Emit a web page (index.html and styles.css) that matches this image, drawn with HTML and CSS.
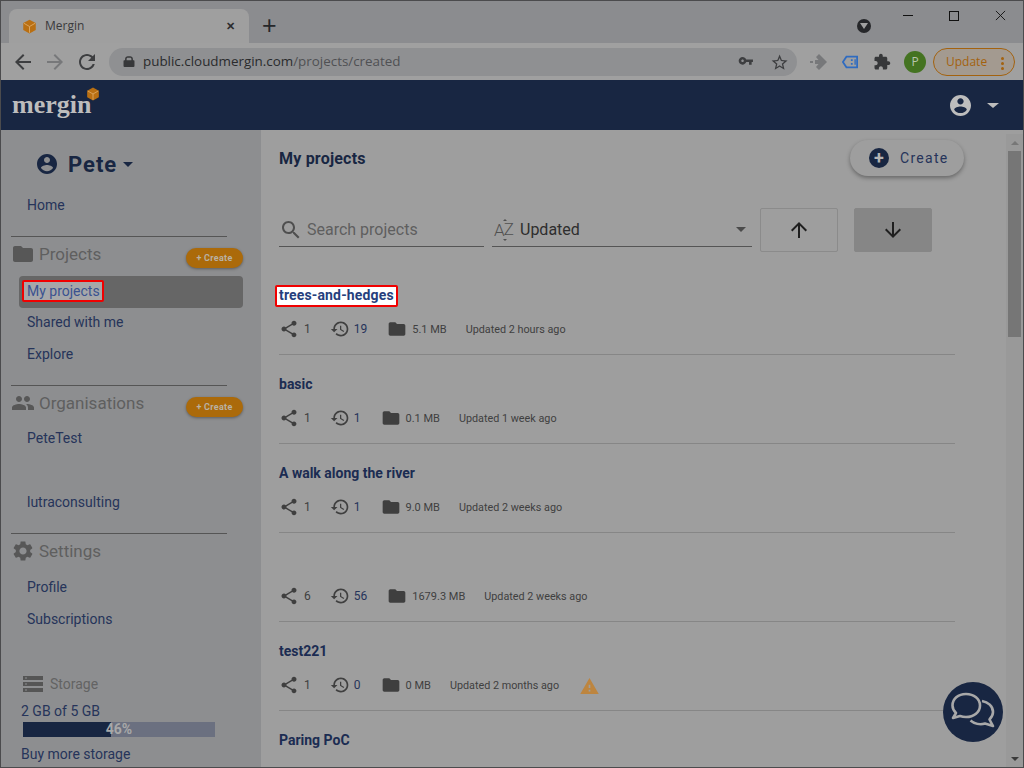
FILE: index.html
```html
<!DOCTYPE html>
<html lang="en">
<head>
<meta charset="UTF-8">
<meta name="viewport" content="width=device-width, initial-scale=1.0">
<title>Mergin</title>
<link rel="stylesheet" href="styles.css">
</head>
<body>
  <svg class="sprite" xmlns="http://www.w3.org/2000/svg">
    <symbol id="i-account" viewBox="2 2 20 20"><path d="M12 2C6.48 2 2 6.48 2 12s4.48 10 10 10 10-4.48 10-10S17.52 2 12 2zm0 3c1.66 0 3 1.34 3 3s-1.34 3-3 3-3-1.34-3-3 1.34-3 3-3zm0 14.2c-2.5 0-4.71-1.28-6-3.22.03-1.99 4-3.08 6-3.08 1.99 0 5.97 1.09 6 3.08-1.29 1.94-3.5 3.22-6 3.22z"/></symbol>
    <symbol id="i-folder" viewBox="0 0 24 24"><path d="M10 4H4c-1.1 0-1.99.9-1.99 2L2 18c0 1.1.9 2 2 2h16c1.1 0 2-.9 2-2V8c0-1.1-.9-2-2-2h-8l-2-2z"/></symbol>
    <symbol id="i-group" viewBox="0 0 24 24"><path d="M16 11c1.66 0 2.99-1.34 2.99-3S17.66 5 16 5c-1.66 0-3 1.34-3 3s1.34 3 3 3zm-8 0c1.66 0 2.99-1.34 2.99-3S9.66 5 8 5C6.34 5 5 6.34 5 8s1.34 3 3 3zm0 2c-2.33 0-7 1.17-7 3.5V19h14v-2.5c0-2.33-4.67-3.5-7-3.5zm8 0c-.29 0-.62.02-.97.05 1.16.84 1.97 1.97 1.97 3.45V19h6v-2.5c0-2.33-4.67-3.5-7-3.5z"/></symbol>
    <symbol id="i-settings" viewBox="0 0 24 24"><path d="M19.14 12.94c.04-.3.06-.61.06-.94 0-.32-.02-.64-.07-.94l2.03-1.58c.18-.14.23-.41.12-.61l-1.92-3.32c-.12-.22-.37-.29-.59-.22l-2.39.96c-.5-.38-1.03-.7-1.62-.94l-.36-2.54c-.04-.24-.24-.41-.48-.41h-3.84c-.24 0-.43.17-.47.41l-.36 2.54c-.59.24-1.13.57-1.62.94l-2.39-.96c-.22-.08-.47 0-.59.22L2.74 8.87c-.12.21-.08.47.12.61l2.03 1.58c-.05.3-.09.63-.09.94s.02.64.07.94l-2.03 1.58c-.18.14-.23.41-.12.61l1.92 3.32c.12.22.37.29.59.22l2.39-.96c.5.38 1.03.7 1.62.94l.36 2.54c.05.24.24.41.48.41h3.84c.24 0 .44-.17.47-.41l.36-2.54c.59-.24 1.13-.56 1.62-.94l2.39.96c.22.08.47 0 .59-.22l1.92-3.32c.12-.22.07-.47-.12-.61l-2.01-1.58zM12 15.6c-1.98 0-3.6-1.62-3.6-3.6s1.62-3.6 3.6-3.6 3.6 1.62 3.6 3.6-1.62 3.6-3.6 3.6z"/></symbol>
    <symbol id="i-share" viewBox="0 0 24 24"><path d="M18 16.08c-.76 0-1.44.3-1.96.77L8.91 12.7c.05-.23.09-.46.09-.7s-.04-.47-.09-.7l7.05-4.11c.54.5 1.25.81 2.04.81 1.66 0 3-1.34 3-3s-1.34-3-3-3-3 1.34-3 3c0 .24.04.47.09.7L8.04 9.81C7.5 9.31 6.79 9 6 9c-1.66 0-3 1.34-3 3s1.34 3 3 3c.79 0 1.5-.31 2.04-.81l7.12 4.16c-.05.21-.08.43-.08.65 0 1.61 1.31 2.92 2.92 2.92s2.92-1.31 2.92-2.92-1.31-2.92-2.92-2.92z"/></symbol>
    <symbol id="i-history" viewBox="0 0 24 24"><path d="M13 3c-4.97 0-9 4.03-9 9H1l3.89 3.89.07.14L9 12H6c0-3.87 3.13-7 7-7s7 3.13 7 7-3.13 7-7 7c-1.93 0-3.68-.79-4.94-2.06l-1.42 1.42C8.27 19.99 10.51 21 13 21c4.97 0 9-4.03 9-9s-4.03-9-9-9zm-1 5v5l4.28 2.54.72-1.21-3.5-2.08V8H12z"/></symbol>
    <symbol id="i-search" viewBox="0 0 24 24"><path d="M15.5 14h-.79l-.28-.27C15.41 12.59 16 11.11 16 9.5 16 5.91 13.09 3 9.5 3S3 5.91 3 9.5 5.91 16 9.5 16c1.61 0 3.09-.59 4.23-1.57l.27.28v.79l5 4.99L20.49 19l-4.99-5zm-6 0C7.01 14 5 11.99 5 9.5S7.01 5 9.5 5 14 7.01 14 9.5 11.99 14 9.5 14z"/></symbol>
    <symbol id="i-up" viewBox="0 0 24 24"><path d="M4 12l1.41 1.41L11 7.83V20h2V7.83l5.58 5.59L20 12l-8-8-8 8z"/></symbol>
    <symbol id="i-down" viewBox="0 0 24 24"><path d="M20 12l-1.41-1.41L13 16.17V4h-2v12.17l-5.58-5.59L4 12l8 8 8-8z"/></symbol>
    <symbol id="i-warning" viewBox="1 2 22 19"><path d="M1 21h22L12 2 1 21zm12-3h-2v-2h2v2zm0-4h-2v-4h2v4z"/></symbol>
    <symbol id="i-storage" viewBox="0 0 20 16"><path fill-rule="evenodd" d="M0 0h20v4H0zM2 1.4v1.2h2V1.4zM0 6h20v4H0zM2 7.4v1.2h2V7.4zM0 12h20v4H0zM2 13.4v1.2h2v-1.2z"/></symbol>
    <symbol id="i-box" viewBox="0 0 24 24"><path d="M12 1l10 5.5v11L12 23 2 17.5v-11z"/><path d="M12 12L3 6.8M12 12l9-5.2M12 12v10" fill="none" stroke="#dba862" stroke-width="1.5"/></symbol>
    <symbol id="i-chat" viewBox="0 0 48 48"><g fill="none" stroke="currentColor" stroke-width="2.6" stroke-linejoin="round"><path d="M33 13c6 1 11 5 11 11 0 3-1.5 5.500-3.500 7.500l3.500 6.500-8-2.500c-5 1.500-11 0-14.500-3"/><path d="M17 6c8 0 14 5 14 11.500S25 29 17 29c-2 0-4-.3-6-1l-7 2 3-5c-2-2-3.500-4.500-3.500-7.500C3.500 11 9 6 17 6z"/></g></symbol>
  </svg>

  <div class="window">
    <div class="tabstrip">
      <div class="tab">
        <svg class="tab-icon"><use href="#i-box"/></svg>
        <span class="tab-title">Mergin</span>
        <span class="tab-close">&#10005;</span>
      </div>
      <span class="new-tab">+</span>
      <span class="media-btn"><i></i></span>
      <div class="win-controls">
        <span class="win-min"></span>
        <span class="win-max"></span>
        <svg class="win-close" viewBox="0 0 12 12"><path d="M1 1l10 10M11 1L1 11"/></svg>
      </div>
    </div>

    <div class="toolbar">
      <svg class="tb-icon"><path d="M20 11H7.83l5.59-5.59L12 4l-8 8 8 8 1.41-1.41L7.83 13H20v-2z"/></svg>
      <svg class="tb-icon tb-off"><path d="M12 4l-1.41 1.41L16.17 11H4v2h12.17l-5.58 5.59L12 20l8-8z"/></svg>
      <svg class="tb-icon"><path d="M17.65 6.35C16.2 4.9 14.21 4 12 4c-4.42 0-7.99 3.58-7.99 8s3.57 8 7.99 8c3.73 0 6.84-2.55 7.73-6h-2.08c-.82 2.33-3.04 4-5.65 4-3.31 0-6-2.69-6-6s2.69-6 6-6c1.66 0 3.14.69 4.22 1.78L13 11h7V4l-2.35 2.35z"/></svg>
      <div class="omnibox">
        <svg class="omni-lock"><path d="M14 6h-.8V4.400C13.200 2.200 11.400.8 9.500.8h-3C4.600.8 2.800 2.200 2.800 4.400V6H2c-.9 0-1.300.6-1.300 1.300v6.400c0 .8.5 1.300 1.300 1.300h12c.8 0 1.300-.5 1.300-1.300V7.300C15.300 6.600 14.900 6 14 6zM4.800 4.400c0-1 .7-1.600 1.700-1.600h3c1 0 1.700.6 1.700 1.600V6H4.800z" transform="scale(.75) translate(0 1)"/></svg>
        <span class="url">public.cloudmergin.com<span class="url-path">/projects/created</span></span>
        <svg class="omni-key"><path d="M12.65 10C11.83 7.67 9.61 6 7 6c-3.31 0-6 2.69-6 6s2.69 6 6 6c2.61 0 4.83-1.67 5.65-4H17v4h4v-4h2v-4H12.65zM7 14c-1.1 0-2-.9-2-2s.9-2 2-2 2 .9 2 2-.9 2-2 2z" transform="translate(0 -2) scale(.65)"/></svg>
        <svg class="omni-star"><path d="M22 9.24l-7.19-.62L12 2 9.19 8.63 2 9.24l5.46 4.73L5.82 21 12 17.27 18.18 21l-1.63-7.03L22 9.24zM12 15.4l-3.76 2.27 1-4.28-3.32-2.88 4.38-.38L12 6.1l1.71 4.04 4.38.38-3.32 2.88 1 4.28L12 15.4z" transform="scale(.8)"/></svg>
      </div>
      <svg class="ext ext-diamond" viewBox="0 0 18 18"><path d="M10 1l8 8-8 8-3-3 2.500-3H6V7h3.500L7 4zM1 8h3v2H1z"/></svg>
      <svg class="ext ext-tag" viewBox="0 0 18 14"><path d="M5 1h12v12H5L1 7z" fill="none" stroke="#2f6bc0" stroke-width="2"/><path d="M10 4h2v2h-2zM10 8h2v2h-2zM14 4h1.500v6H14z" fill="#2f6bc0"/></svg>
      <svg class="ext ext-puzzle" viewBox="0 0 24 24"><path d="M20.5 11H19V7c0-1.1-.9-2-2-2h-4V3.5C13 2.12 11.88 1 10.5 1S8 2.12 8 3.5V5H4c-1.1 0-1.99.9-1.99 2v3.8H3.5c1.49 0 2.7 1.21 2.7 2.7s-1.21 2.7-2.7 2.7H2V20c0 1.1.9 2 2 2h3.8v-1.5c0-1.49 1.21-2.7 2.7-2.7 1.49 0 2.7 1.21 2.7 2.7V22H17c1.1 0 2-.9 2-2v-4h1.5c1.38 0 2.5-1.12 2.5-2.5S21.88 11 20.5 11z"/></svg>
      <span class="avatar">P</span>
      <span class="update">Update<span class="update-dots"><i></i><i></i><i></i></span></span>
    </div>

    <header class="app-bar">
      <div class="logo">mergin<svg class="logo-box"><use href="#i-box"/></svg></div>
      <svg class="bar-user"><use href="#i-account"/></svg>
      <span class="caret caret-light"></span>
    </header>

    <div class="content">
      <aside class="sidebar">
        <div class="user">
          <svg class="user-icon"><use href="#i-account"/></svg>
          <span class="user-name">Pete</span>
          <span class="caret caret-navy"></span>
        </div>
        <a class="nav-item nav-home">Home</a>

        <section class="side-section">
          <div class="side-head">
            <svg class="side-icon"><use href="#i-folder"/></svg>
            <span class="side-title">Projects</span>
            <span class="mini-create">+ Create</span>
          </div>
          <a class="nav-item nav-active"><span class="callout-side">My projects</span></a>
          <a class="nav-item">Shared with me</a>
          <a class="nav-item">Explore</a>
        </section>

        <section class="side-section">
          <div class="side-head side-head-short">
            <svg class="side-icon"><use href="#i-group"/></svg>
            <span class="side-title">Organisations</span>
            <span class="mini-create">+ Create</span>
          </div>
          <a class="nav-item">PeteTest</a>
          <a class="nav-item"></a>
          <a class="nav-item">lutraconsulting</a>
        </section>

        <section class="side-section">
          <div class="side-head">
            <svg class="side-icon"><use href="#i-settings"/></svg>
            <span class="side-title">Settings</span>
          </div>
          <a class="nav-item">Profile</a>
          <a class="nav-item">Subscriptions</a>
        </section>

        <div class="storage">
          <div class="storage-head">
            <svg class="storage-icon"><use href="#i-storage"/></svg>
            <span>Storage</span>
          </div>
          <div class="storage-used">2 GB of 5 GB</div>
          <div class="storage-bar">
            <div class="storage-fill" style="width: 46%"></div>
            <span class="storage-pct">46%</span>
          </div>
          <a class="storage-buy">Buy more storage</a>
        </div>
      </aside>

      <main class="main">
        <div class="main-head">
          <h1>My projects</h1>
          <button class="create-btn" type="button">
            <span class="create-plus">+</span>
            <span>Create</span>
          </button>
        </div>

        <div class="filters">
          <div class="field field-search">
            <svg class="field-icon"><use href="#i-search"/></svg>
            <span>Search projects</span>
          </div>
          <div class="field field-sort">
            <span class="az">A<span class="az-z">Z</span></span>
            <span class="sort-value">Updated</span>
            <span class="caret caret-grey"></span>
          </div>
          <button class="sort-btn" type="button"><svg><use href="#i-up"/></svg></button>
          <button class="sort-btn sort-on" type="button"><svg><use href="#i-down"/></svg></button>
        </div>

        <div class="projects">
          <article class="project">
            <div class="project-name"><span class="callout-main">trees-and-hedges</span></div>
            <div class="meta">
              <svg class="meta-icon"><use href="#i-share"/></svg><span class="count share-count">1</span>
              <svg class="meta-icon"><use href="#i-history"/></svg><span class="count hist-count">19</span>
              <svg class="meta-icon"><use href="#i-folder"/></svg><span class="size">5.1 MB</span>
              <span class="updated">Updated 2 hours ago</span>
            </div>
          </article>
          <article class="project">
            <div class="project-name">basic</div>
            <div class="meta">
              <svg class="meta-icon"><use href="#i-share"/></svg><span class="count share-count">1</span>
              <svg class="meta-icon"><use href="#i-history"/></svg><span class="count hist-count">1</span>
              <svg class="meta-icon"><use href="#i-folder"/></svg><span class="size">0.1 MB</span>
              <span class="updated">Updated 1 week ago</span>
            </div>
          </article>
          <article class="project">
            <div class="project-name">A walk along the river</div>
            <div class="meta">
              <svg class="meta-icon"><use href="#i-share"/></svg><span class="count share-count">1</span>
              <svg class="meta-icon"><use href="#i-history"/></svg><span class="count hist-count">1</span>
              <svg class="meta-icon"><use href="#i-folder"/></svg><span class="size">9.0 MB</span>
              <span class="updated">Updated 2 weeks ago</span>
            </div>
          </article>
          <article class="project">
            <div class="project-name"></div>
            <div class="meta">
              <svg class="meta-icon"><use href="#i-share"/></svg><span class="count share-count">6</span>
              <svg class="meta-icon"><use href="#i-history"/></svg><span class="count hist-count">56</span>
              <svg class="meta-icon"><use href="#i-folder"/></svg><span class="size">1679.3 MB</span>
              <span class="updated">Updated 2 weeks ago</span>
            </div>
          </article>
          <article class="project">
            <div class="project-name">test221</div>
            <div class="meta">
              <svg class="meta-icon"><use href="#i-share"/></svg><span class="count share-count">1</span>
              <svg class="meta-icon"><use href="#i-history"/></svg><span class="count hist-count">0</span>
              <svg class="meta-icon"><use href="#i-folder"/></svg><span class="size">0 MB</span>
              <span class="updated">Updated 2 months ago</span>
              <svg class="warn"><use href="#i-warning"/></svg>
            </div>
          </article>
          <article class="project">
            <div class="project-name">Paring PoC</div>
          </article>
        </div>
      </main>

      <div class="scrollbar">
        <span class="sb-arrow sb-up"></span>
        <div class="sb-track"><div class="sb-thumb"></div></div>
        <span class="sb-arrow sb-down"></span>
      </div>

      <button class="chat" type="button"><svg><use href="#i-chat"/></svg></button>
    </div>
  </div>
</body>
</html>
```

FILE: styles.css
```css
html, body {
  margin: 0;
  height: 100%;
  overflow: hidden;
}

body {
  font-family: Roboto, "Liberation Sans", sans-serif;
}

.sprite {
  display: none;
}

.window {
  height: 768px;
  box-sizing: border-box;
  border: 1px solid #4b4b4d;
  display: flex;
  flex-direction: column;
  overflow: hidden;
  background-color: #9e9e9e;
}

/* Browser chrome */
.tabstrip {
  height: 42px;
  flex: none;
  display: flex;
  align-items: flex-end;
  background-color: #8b8c8f;
  position: relative;
}

.tab {
  width: 240px;
  height: 34px;
  margin-left: 8px;
  box-sizing: border-box;
  padding: 0 10px 0 13px;
  display: flex;
  align-items: center;
  background-color: #9f9f9f;
  border-radius: 8px 8px 0 0;
}

.tab-icon {
  width: 15px;
  height: 15px;
  fill: #b96f12;
  flex: none;
}

.tab-title {
  margin-left: 8px;
  padding-bottom: 2px;
  flex: 1;
  font-family: "Open Sans", sans-serif;
  font-size: 12px;
  color: #3a3a3c;
}

.tab-close {
  font-size: 11px;
  font-weight: bold;
  color: #2b2c2e;
  margin-right: 4px;
}

.new-tab {
  margin: 0 0 2px 13px;
  font-family: "Liberation Sans", sans-serif;
  font-size: 25px;
  line-height: 32px;
  color: #26272a;
}

.media-btn {
  position: absolute;
  left: 856px;
  top: 18px;
  width: 14px;
  height: 14px;
  border-radius: 50%;
  background-color: #26272a;
  display: flex;
  align-items: center;
  justify-content: center;
}

.media-btn i {
  border-top: 6px solid #a0a0a0;
  border-left: 4px solid transparent;
  border-right: 4px solid transparent;
}

.win-controls {
  position: absolute;
  right: 0;
  top: 0;
  display: flex;
  align-items: center;
  gap: 36px;
  height: 29px;
  padding-right: 17px;
}

.win-min {
  width: 10px;
  height: 1px;
  background-color: #111;
}

.win-max {
  width: 8px;
  height: 8px;
  border: 1px solid #111;
}

.win-close {
  width: 11px;
  height: 11px;
  fill: none;
  stroke: #111;
  stroke-width: 1;
}

.toolbar {
  height: 37px;
  flex: none;
  display: flex;
  align-items: center;
  background-color: #a0a0a0;
}

.tb-icon {
  width: 24px;
  height: 24px;
  margin-left: 8px;
  flex: none;
  fill: #3d3e40;
}

.tb-icon:first-child {
  margin-left: 10px;
}

.tb-off {
  fill: #77787a;
}

.omnibox {
  width: 688px;
  height: 28px;
  margin-left: 10px;
  box-sizing: border-box;
  padding: 0 8px 0 14px;
  border-radius: 14px;
  background-color: #8f9092;
  display: flex;
  align-items: center;
  flex: none;
}

.omni-lock {
  width: 12px;
  height: 14px;
  fill: #37383a;
  flex: none;
}

.url {
  margin-left: 8px;
  padding-bottom: 2px;
  flex: 1;
  font-family: "Open Sans", sans-serif;
  font-size: 13.4px;
  color: #2a2b2d;
  white-space: nowrap;
}

.url-path {
  color: #505154;
}

.omni-key {
  width: 16px;
  height: 14px;
  fill: #3d3e40;
  flex: none;
}

.omni-star {
  width: 19px;
  height: 18px;
  margin-left: 16px;
  fill: #3d3e40;
  flex: none;
}

.ext {
  flex: none;
}

.ext-diamond {
  width: 18px;
  height: 18px;
  margin-left: 12px;
  fill: #77787a;
}

.ext-tag {
  width: 16px;
  height: 14px;
  margin-left: 15px;
}

.ext-puzzle {
  width: 18px;
  height: 18px;
  margin-left: 15px;
  fill: #37383a;
}

.avatar {
  width: 22px;
  height: 22px;
  margin-left: 13px;
  border-radius: 50%;
  flex: none;
  background-color: #447321;
  color: #b9c4ae;
  font-family: "Open Sans", sans-serif;
  font-size: 12px;
  line-height: 22px;
  text-align: center;
}

.update {
  width: 82px;
  height: 28px;
  margin-left: 7px;
  box-sizing: border-box;
  padding-left: 12px;
  border: 1px solid #a3620f;
  border-radius: 14px;
  background-color: #a39a90;
  color: #a3620f;
  font-family: "Open Sans", sans-serif;
  font-size: 12px;
  line-height: 25px;
  position: relative;
  flex: none;
}

.update-dots {
  position: absolute;
  right: 10px;
  top: 8px;
  display: flex;
  flex-direction: column;
  gap: 2px;
}

.update-dots i {
  width: 3px;
  height: 3px;
  border-radius: 50%;
  background-color: #a3620f;
}

/* App header */
.app-bar {
  height: 50px;
  flex: none;
  display: flex;
  align-items: center;
  padding: 0 24px 0 11px;
  background-color: #182642;
}

.logo {
  flex: 1;
  position: relative;
  font-family: "Liberation Serif", serif;
  font-weight: bold;
  font-size: 26px;
  line-height: 50px;
  color: #bdbdbd;
}

.logo-box {
  position: absolute;
  left: 74px;
  top: 7px;
  width: 14px;
  height: 14px;
  fill: #b96f12;
}

.bar-user {
  width: 21px;
  height: 21px;
  margin-right: 2px;
  fill: #bdbdbd;
}

.caret {
  display: inline-block;
  border-left: 5px solid transparent;
  border-right: 5px solid transparent;
  border-top: 5px solid #bdbdbd;
}

.caret-light {
  margin-left: 14px;
  border-left-width: 6px;
  border-right-width: 6px;
}

.caret-navy {
  margin-left: 6px;
  border-top-color: #182642;
}

.caret-grey {
  border-top-color: #4b4b4b;
  margin-left: auto;
}

/* Sidebar + main */
.content {
  flex: 1;
  min-height: 0;
  display: flex;
  position: relative;
}

.sidebar {
  width: 260px;
  flex: none;
  box-sizing: border-box;
  background-color: #8d8e90;
  padding-top: 22px;
  display: flex;
  flex-direction: column;
}

.user {
  height: 24px;
  padding-left: 36px;
  display: flex;
  align-items: center;
}

.user-icon {
  width: 20px;
  height: 20px;
  fill: #182642;
  flex: none;
}

.user-name {
  margin-left: 11px;
  font-size: 22px;
  font-weight: bold;
  letter-spacing: 1px;
  color: #182642;
}

.nav-item {
  display: block;
  height: 32px;
  padding-left: 26px;
  font-size: 14px;
  line-height: 32px;
  color: #26345a;
}

.nav-home {
  margin-top: 13px;
  margin-bottom: 15px;
}

.side-section {
  margin-left: 10px;
  width: 216px;
  border-top: 1px solid #555;
  margin-bottom: 15px;
}

.side-section .nav-item {
  margin-left: -10px;
  width: 216px;
}

.side-head {
  height: 37px;
  box-sizing: border-box;
  padding-bottom: 4px;
  display: flex;
  align-items: center;
  position: relative;
}

.side-head-short {
  height: 36px;
  padding-bottom: 3px;
}

.side-icon {
  width: 24px;
  height: 24px;
  fill: #575757;
  flex: none;
}

.side-title {
  margin-left: 4px;
  font-size: 17px;
  color: #5f5f5f;
}

.mini-create {
  position: absolute;
  left: 175px;
  top: 11px;
  width: 57px;
  height: 20px;
  border-radius: 10px;
  background-color: #ab6a0a;
  box-shadow: 0 1px 3px rgba(0, 0, 0, 0.35);
  color: #b9b1a3;
  font-size: 9px;
  font-weight: bold;
  letter-spacing: 0.3px;
  line-height: 20px;
  text-align: center;
}

.side-section .nav-active {
  margin-left: 8px;
  margin-top: 2px;
  margin-bottom: -2px;
  width: 224px;
  padding: 0 0 2px 3px;
  box-sizing: border-box;
  background-color: #666;
  border-radius: 4px;
  display: flex;
  align-items: center;
}

/* highlighted callouts drawn over the dimmed page */
.callout-side {
  height: 22px;
  line-height: 19px;
  padding: 0 2px 0 3px;
  box-sizing: border-box;
  border: 2px solid #f00000;
  border-radius: 2px;
  background-color: #a6a7a9;
  color: #3a5290;
}

.callout-main {
  display: inline-block;
  height: 22px;
  margin: -1px 0 0 -4px;
  padding: 0 2px;
  box-sizing: border-box;
  border: 2px solid #f00000;
  border-radius: 2px;
  background-color: #fff;
  color: #263f7d;
  letter-spacing: 0.15px;
  line-height: 17px;
  vertical-align: top;
}

.storage {
  margin-top: auto;
  padding: 0 0 4px 20px;
  color: #26345a;
  font-size: 14px;
}

.storage-head {
  height: 20px;
  padding-left: 2px;
  margin-bottom: 8px;
  display: flex;
  align-items: center;
  color: #636363;
}

.storage-icon {
  width: 20px;
  height: 16px;
  margin-right: 7px;
  fill: #555;
}

.storage-used {
  line-height: 18px;
}

.storage-bar {
  width: 192px;
  height: 15px;
  margin: 2px 0 0 2px;
  background-color: #6b7080;
  position: relative;
}

.storage-fill {
  height: 100%;
  background-color: #182642;
}

.storage-pct {
  position: absolute;
  left: 0;
  right: 0;
  top: 0;
  text-align: center;
  font-size: 14px;
  font-weight: bold;
  line-height: 15px;
  color: #a8a8a8;
}

.storage-buy {
  display: block;
  margin-top: 8px;
  line-height: 18px;
}

.main {
  flex: 1;
  min-width: 0;
  padding: 0 51px 0 18px;
  background-color: #9e9e9e;
  overflow: hidden;
}

.main-head {
  height: 56px;
  padding-top: 10px;
  display: flex;
  justify-content: space-between;
  align-items: flex-start;
}

.main-head h1 {
  margin: 9px 0 0;
  font-size: 16px;
  font-weight: bold;
  letter-spacing: 0.2px;
  line-height: 20px;
  color: #182642;
}

.create-btn {
  width: 114px;
  height: 36px;
  margin-right: -9px;
  padding: 0 0 0 19px;
  border: none;
  border-radius: 18px;
  background-color: #9e9e9e;
  box-shadow: 0 2px 4px rgba(0, 0, 0, 0.35);
  display: flex;
  align-items: center;
  gap: 11px;
  font-family: Roboto, sans-serif;
  font-size: 14px;
  letter-spacing: 1.3px;
  color: #26345a;
}

.create-plus {
  width: 20px;
  height: 20px;
  border-radius: 50%;
  background-color: #182642;
  color: #b4b4b4;
  font-size: 18px;
  font-weight: bold;
  letter-spacing: 0;
  line-height: 19px;
  text-align: center;
}

.filters {
  height: 44px;
  margin-top: 12px;
  display: flex;
  align-items: flex-start;
}

.field {
  height: 39px;
  box-sizing: border-box;
  padding-top: 5px;
  border-bottom: 1px solid #555;
  display: flex;
  align-items: center;
  font-size: 16px;
}

.field-search {
  width: 205px;
  color: #5f5f5f;
}

.field-icon {
  width: 24px;
  height: 24px;
  margin-right: 4px;
  fill: #4f4f4f;
}

.field-sort {
  width: 260px;
  margin-left: 8px;
  color: #2e2e2e;
}

.az {
  margin-left: 2px;
  width: 20px;
  font-size: 17px;
  font-weight: 300;
  color: #505050;
  position: relative;
  letter-spacing: -1px;
}

.az::before,
.az::after {
  content: "";
  position: absolute;
  left: 9px;
  border-left: 2px solid transparent;
  border-right: 2px solid transparent;
}

.az::before {
  top: -1px;
  border-bottom: 2px solid #505050;
}

.az::after {
  bottom: -1px;
  border-top: 2px solid #505050;
}

.az-z {
  position: relative;
  top: -1px;
}

.sort-value {
  margin-left: 6px;
}

.field-sort .caret {
  margin-right: 6px;
}

.sort-btn {
  width: 78px;
  height: 44px;
  margin-left: 8px;
  padding: 0;
  border: 1px solid #8b8b8b;
  border-radius: 2px;
  background-color: #9e9e9e;
  display: flex;
  align-items: center;
  justify-content: center;
}

.sort-btn svg {
  width: 24px;
  height: 24px;
  fill: #1f1f1f;
}

.sort-on {
  margin-left: 16px;
  border-color: #868686;
  background-color: #868686;
}

.projects {
  margin-top: 14px;
}

.project {
  height: 88px;
  border-bottom: 1px solid #868686;
}

.project:last-child {
  border-bottom: none;
}

.project-name {
  height: 18px;
  padding-top: 20px;
  font-size: 14px;
  font-weight: bold;
  line-height: 18px;
  color: #1b2c52;
}

.meta {
  margin-top: 14px;
  height: 22px;
  display: flex;
  align-items: center;
  font-size: 11px;
  color: #404040;
}

.meta-icon {
  width: 20px;
  height: 20px;
  fill: #3f3f3f;
  flex: none;
}

.count {
  margin-left: 5px;
  font-size: 12px;
  color: #404040;
}

.share-count {
  margin-right: 19px;
}

.hist-count {
  margin-left: 4px;
  margin-right: 20px;
  color: #26345a;
}

.size {
  margin-left: 5px;
}

.updated {
  margin-left: 19px;
  font-size: 10.8px;
}

.warn {
  width: 19px;
  height: 16px;
  margin: 2px 0 0 21px;
  fill: #bd853f;
}

.scrollbar {
  width: 17px;
  flex: none;
  margin-top: 4px;
  background-color: #999;
  display: flex;
  flex-direction: column;
  align-items: center;
}

.sb-arrow {
  height: 17px;
  flex: none;
  display: flex;
  align-items: center;
}

.sb-up::before {
  content: "";
  border-left: 4px solid transparent;
  border-right: 4px solid transparent;
  border-bottom: 4px solid #777;
}

.sb-down::before {
  content: "";
  border-left: 4px solid transparent;
  border-right: 4px solid transparent;
  border-top: 4px solid #3a3a3a;
}

.sb-track {
  flex: 1;
  width: 13px;
}

.sb-thumb {
  height: 186px;
  background-color: #767676;
}

.chat {
  position: absolute;
  left: 942px;
  top: 552px;
  width: 60px;
  height: 60px;
  padding: 0;
  border: none;
  border-radius: 50%;
  background-color: #182642;
  color: #a8a8a8;
  display: flex;
  align-items: center;
  justify-content: center;
}

.chat svg {
  width: 48px;
  height: 48px;
}
```
